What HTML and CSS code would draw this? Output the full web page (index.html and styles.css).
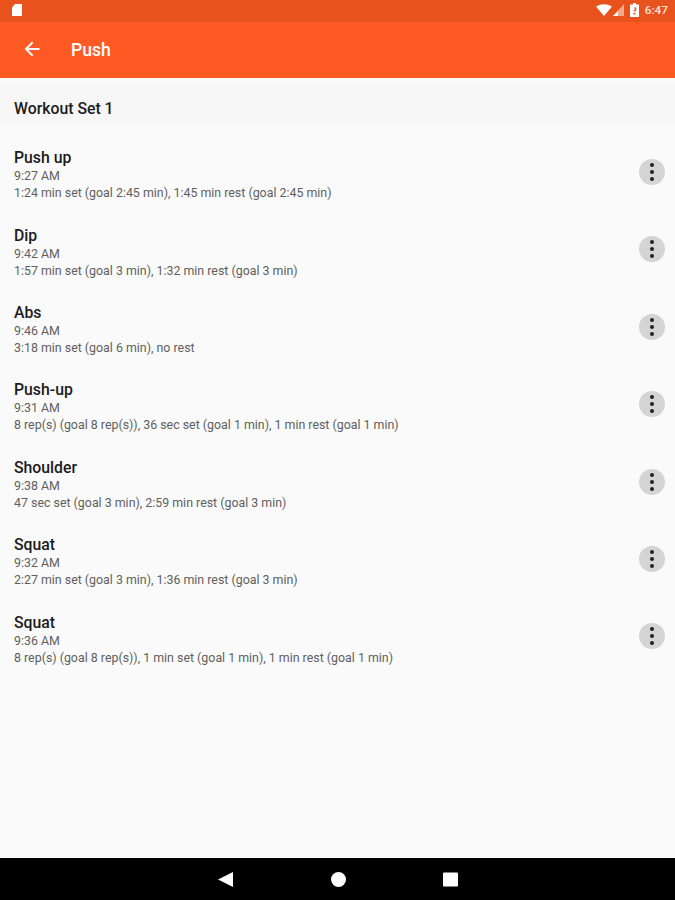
FILE: index.html
```html
<!DOCTYPE html>
<html lang="en">
<head>
<meta charset="utf-8">
<title>Push</title>
<link rel="stylesheet" href="styles.css">
</head>
<body>
<div class="app">
  <div class="status">
    <svg class="sd" width="12" height="14" viewBox="0 0 12 14"><path d="M4 1h7v12H1V4.500z" fill="#fff"/></svg>
    <div class="status-right">
      <svg width="16" height="12" viewBox="0 0 16 12"><path d="M0 2.500Q8-2 16 2.500L8 12z" fill="#fff"/></svg>
      <svg class="signal" width="11" height="12" viewBox="0 0 11 12"><path d="M11 0v12H0z" fill="#f2a98c"/><path d="M5 7v5H0z" fill="#fff"/></svg>
      <svg class="batt" width="9" height="14" viewBox="0 0 9 14"><path d="M3 0h3v1.500h3V14H0V1.500h3z" fill="#fff"/><path d="M4.500 4a2 2 0 0 1 2 2c0 1-1 1.500-1 2.500h-2c0-1 1.500-1.500 1.200-2.500M3.500 10h2v1.500h-2z" fill="#e8521d"/></svg>
      <span class="clock">6:47</span>
    </div>
  </div>
  <header class="toolbar">
    <svg class="back" width="16" height="16" viewBox="0 0 16 16"><path d="M15.500 7H4.300l5-5L8 .6.600 8 8 15.400 9.300 14l-5-5h11.200z" fill="#fff"/></svg>
    <span class="title">Push</span>
  </header>
  <div class="set-header">Workout Set 1</div>
  <main class="list">
    <div class="row"><div class="info"><div class="name">Push up</div><div class="sub">9:27 AM</div><div class="sub">1:24 min set (goal 2:45 min), 1:45 min rest (goal 2:45 min)</div></div><div class="more"><i></i><i></i><i></i></div></div>
    <div class="row"><div class="info"><div class="name">Dip</div><div class="sub">9:42 AM</div><div class="sub">1:57 min set (goal 3 min), 1:32 min rest (goal 3 min)</div></div><div class="more"><i></i><i></i><i></i></div></div>
    <div class="row"><div class="info"><div class="name">Abs</div><div class="sub">9:46 AM</div><div class="sub">3:18 min set (goal 6 min), no rest</div></div><div class="more"><i></i><i></i><i></i></div></div>
    <div class="row"><div class="info"><div class="name">Push-up</div><div class="sub">9:31 AM</div><div class="sub">8 rep(s) (goal 8 rep(s)), 36 sec set (goal 1 min), 1 min rest (goal 1 min)</div></div><div class="more"><i></i><i></i><i></i></div></div>
    <div class="row"><div class="info"><div class="name">Shoulder</div><div class="sub">9:38 AM</div><div class="sub">47 sec set (goal 3 min), 2:59 min rest (goal 3 min)</div></div><div class="more"><i></i><i></i><i></i></div></div>
    <div class="row"><div class="info"><div class="name">Squat</div><div class="sub">9:32 AM</div><div class="sub">2:27 min set (goal 3 min), 1:36 min rest (goal 3 min)</div></div><div class="more"><i></i><i></i><i></i></div></div>
    <div class="row"><div class="info"><div class="name">Squat</div><div class="sub">9:36 AM</div><div class="sub">8 rep(s) (goal 8 rep(s)), 1 min set (goal 1 min), 1 min rest (goal 1 min)</div></div><div class="more"><i></i><i></i><i></i></div></div>
  </main>
  <nav class="navbar">
    <svg width="15" height="15" viewBox="0 0 15 15"><path d="M0 7.500L15 0v15z" fill="#fff"/></svg>
    <svg width="15" height="15" viewBox="0 0 15 15"><circle cx="7.500" cy="7.500" r="7.500" fill="#fff"/></svg>
    <svg width="15" height="15" viewBox="0 0 15 15"><rect width="15" height="14" y=".5" rx="1" fill="#fff"/></svg>
  </nav>
</div>
</body>
</html>
```
FILE: styles.css
```css
* { box-sizing: border-box; }
html, body { margin: 0; padding: 0; }
body { font-family: Roboto, "Liberation Sans", sans-serif; background: #fafafa; }
.app { width: 675px; height: 900px; display: flex; flex-direction: column; overflow: hidden; }
.status { height: 22px; background: #e8521d; display: flex; align-items: center; justify-content: space-between; padding: 0 7px 2px 11px; flex: none; }
.status-right { display: flex; align-items: center; }
.signal { margin-left: 1px; }
.batt { margin-left: 6px; }
.clock { margin-left: 6px; color: #fbe3d8; font-size: 11.800px; font-weight: 500; }
.toolbar { height: 56px; background: #ff5a24; display: flex; align-items: center; padding: 0 0 0 24px; flex: none; }
.back { margin-top: -2px; }
.title { margin-left: 31px; color: #fff; font-size: 17.600px; font-weight: 500; }
.set-header { height: 53px; background: linear-gradient(#fbfbfb, #f6f6f6 25%, #f6f6f6 75%, #fafafa); display: flex; align-items: center; padding: 7px 0 0 14px; font-size: 15.800px; font-weight: 500; color: #1c1c1c; flex: none; }
.list { flex: 1; display: flex; flex-direction: column; padding-top: 2.400px; }
.row { height: 77.400px; display: flex; align-items: center; justify-content: space-between; padding: 0 10px 0 14px; flex: none; }
.info { padding-top: 5.400px; }
.name { font-size: 15.800px; font-weight: 500; color: #1c1c1c; line-height: 19px; }
.sub { font-size: 12.400px; color: #5f5f5f; line-height: 17px; }
.more { width: 26px; height: 26px; border-radius: 50%; background: #d4d4d4; display: flex; flex-direction: column; align-items: center; justify-content: center; gap: 3px; }
.more i { width: 4px; height: 4px; border-radius: 50%; background: #222; display: block; }
.navbar { height: 42px; background: #000; display: flex; align-items: center; justify-content: center; gap: 97.500px; padding-left: 1px; flex: none; }
```
